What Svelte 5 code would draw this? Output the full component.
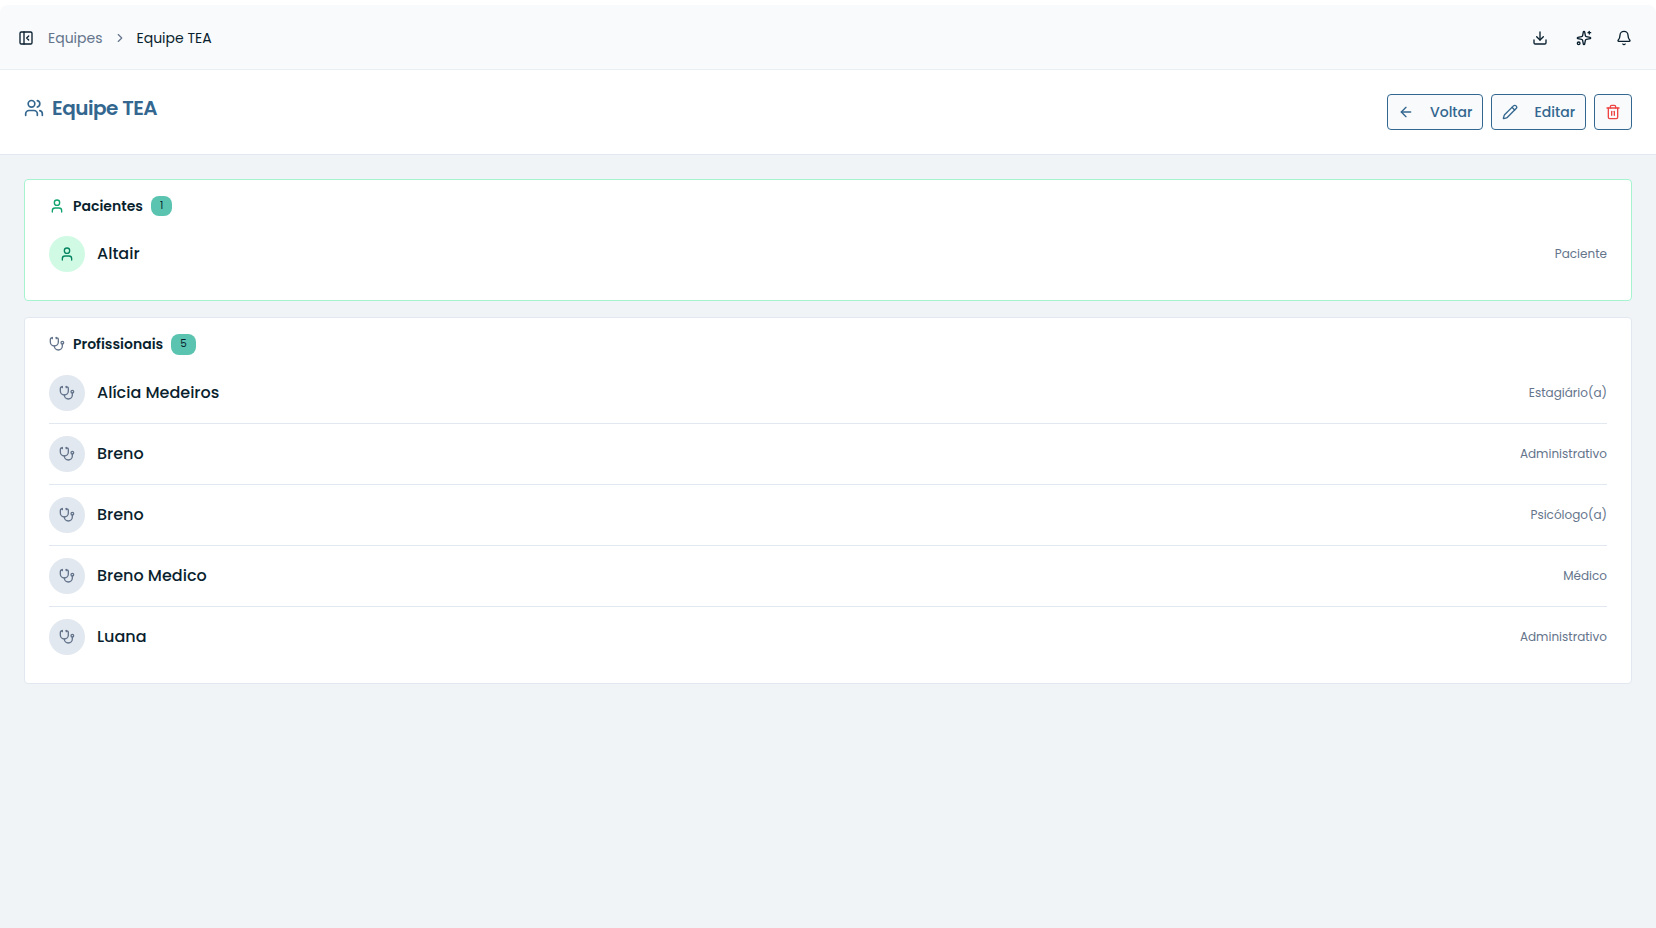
<script lang="ts">
    type Member = { name: string; role: string };
    type IconName = keyof typeof icons;

    const icons = {
        panel: '<rect width="18" height="18" x="3" y="3" rx="2"/><path d="M9 3v18"/><path d="m16 15-3-3 3-3"/>',
        chevron: '<path d="m9 18 6-6-6-6"/>',
        download:
            '<path d="M12 15V3"/><path d="M21 15v4a2 2 0 0 1-2 2H5a2 2 0 0 1-2-2v-4"/><path d="m7 10 5 5 5-5"/>',
        sparkles:
            '<path d="M11.017 2.814a1 1 0 0 1 1.966 0l1.051 5.558a2 2 0 0 0 1.594 1.594l5.558 1.051a1 1 0 0 1 0 1.966l-5.558 1.051a2 2 0 0 0-1.594 1.594l-1.051 5.558a1 1 0 0 1-1.966 0l-1.051-5.558a2 2 0 0 0-1.594-1.594l-5.558-1.051a1 1 0 0 1 0-1.966l5.558-1.051a2 2 0 0 0 1.594-1.594z"/><path d="M20 2v4"/><path d="M22 4h-4"/><circle cx="4" cy="20" r="2"/>',
        bell: '<path d="M10.268 21a2 2 0 0 0 3.464 0"/><path d="M3.262 15.326A1 1 0 0 0 4 17h16a1 1 0 0 0 .74-1.673C19.41 13.956 18 12.499 18 8A6 6 0 0 0 6 8c0 4.499-1.411 5.956-2.738 7.326"/>',
        users: '<path d="M16 21v-2a4 4 0 0 0-4-4H6a4 4 0 0 0-4 4v2"/><path d="M16 3.128a4 4 0 0 1 0 7.744"/><path d="M22 21v-2a4 4 0 0 0-3-3.87"/><circle cx="9" cy="7" r="4"/>',
        user: '<path d="M19 21v-2a4 4 0 0 0-4-4H9a4 4 0 0 0-4 4v2"/><circle cx="12" cy="7" r="4"/>',
        stethoscope:
            '<path d="M11 2v2"/><path d="M5 2v2"/><path d="M5 3H4a2 2 0 0 0-2 2v4a6 6 0 0 0 12 0V5a2 2 0 0 0-2-2h-1"/><path d="M8 15a6 6 0 0 0 12 0v-3"/><circle cx="20" cy="10" r="2"/>',
        arrow: '<path d="m12 19-7-7 7-7"/><path d="M19 12H5"/>',
        pencil: '<path d="M21.174 6.812a1 1 0 0 0-3.986-3.987L3.842 16.174a2 2 0 0 0-.5.83l-1.321 4.352a.5.5 0 0 0 .623.622l4.353-1.32a2 2 0 0 0 .83-.497z"/><path d="m15 5 4 4"/>',
        trash: '<path d="M3 6h18"/><path d="M19 6v14a2 2 0 0 1-2 2H7a2 2 0 0 1-2-2V6"/><path d="M8 6V4a2 2 0 0 1 2-2h4a2 2 0 0 1 2 2v2"/><path d="M10 11v6"/><path d="M14 11v6"/>',
    };

    const team = "Equipe TEA";

    const patients: Member[] = [{ name: "Altair", role: "Paciente" }];

    const professionals: Member[] = [
        { name: "Alícia Medeiros", role: "Estagiário(a)" },
        { name: "Breno", role: "Administrativo" },
        { name: "Breno", role: "Psicólogo(a)" },
        { name: "Breno Medico", role: "Médico" },
        { name: "Luana", role: "Administrativo" },
    ];
</script>

{#snippet icon(name: IconName, size = 16)}
    <svg
        width={size}
        height={size}
        viewBox="0 0 24 24"
        fill="none"
        stroke="currentColor"
        stroke-width="2"
        stroke-linecap="round"
        stroke-linejoin="round"
        aria-hidden="true"
    >
        {@html icons[name]}
    </svg>
{/snippet}

{#snippet memberCard(title: string, members: Member[], glyph: IconName, kind: string)}
    <section class="card {kind}">
        <h2>
            {@render icon(glyph)}
            <span>{title}</span>
            <span class="badge">{members.length}</span>
        </h2>

        <ul>
            {#each members as member}
                <li>
                    <span class="avatar">{@render icon(glyph)}</span>
                    <span class="name">{member.name}</span>
                    <span class="role">{member.role}</span>
                </li>
            {/each}
        </ul>
    </section>
{/snippet}

<div class="page">
    <header class="topbar">
        <button class="plain" type="button" aria-label="Menu">{@render icon("panel")}</button>

        <nav>
            <a href="#equipes">Equipes</a>
            {@render icon("chevron", 14)}
            <span class="current">{team}</span>
        </nav>

        <div class="tools">
            <button class="plain" type="button" aria-label="Baixar">{@render icon("download")}</button>
            <button class="plain spark" type="button" aria-label="Assistente">{@render icon("sparkles")}</button>
            <button class="plain" type="button" aria-label="Notificações">{@render icon("bell")}</button>
        </div>
    </header>

    <div class="heading">
        <h1>
            {@render icon("users", 20)}
            <span>{team}</span>
        </h1>

        <div class="actions">
            <button class="action back" type="button">{@render icon("arrow")}<span>Voltar</span></button>
            <button class="action edit" type="button">{@render icon("pencil")}<span>Editar</span></button>
            <button class="action delete" type="button" aria-label="Excluir">{@render icon("trash")}</button>
        </div>
    </div>

    <main>
        {@render memberCard("Pacientes", patients, "user", "patients")}
        {@render memberCard("Profissionais", professionals, "stethoscope", "professionals")}
    </main>
</div>

<style>
    :global(body) {
        background-color: #fff;
    }

    .page {
        --color-text: #0a1f2e;
        --color-muted: #64748b;
        --color-primary: #33678f;
        --color-border: #e2e8f0;

        box-sizing: border-box;
        display: flex;
        flex-direction: column;
        min-height: 100vh;
        padding-top: 5px;

        font-family: Poppins, Inter, sans-serif;
        color: var(--color-text);
    }

    .page * {
        box-sizing: border-box;
    }

    svg {
        display: block;
        flex-shrink: 0;
    }

    button {
        font: inherit;
        color: inherit;
        cursor: pointer;
    }

    .plain {
        padding: 0;
        border: none;
        background: none;
    }

    .topbar {
        display: flex;
        align-items: center;

        height: 65px;
        padding: 2px 24px 0 18px;

        background-color: #f8fafc;
        border-bottom: 1px solid #e9eef3;
        border-radius: 8px 8px 0 0;
    }

    nav {
        display: flex;
        align-items: center;

        margin-left: 14px;

        font-size: 14px;
        line-height: 20px;
        color: var(--color-muted);
    }

    nav a {
        width: 55px;
        margin-right: 10px;
        color: inherit;
        text-decoration: none;
    }

    .current {
        margin-left: 9.5px;
        color: var(--color-text);
    }

    .tools {
        display: flex;
        gap: 24px;
        margin-left: auto;
    }

    .spark {
        margin-left: 4px;
    }

    .heading {
        display: flex;
        justify-content: space-between;
        align-items: flex-start;

        height: 85px;
        padding: 24px;

        background-color: #fff;
        border-bottom: 1px solid var(--color-border);
    }

    h1 {
        display: flex;
        align-items: center;
        gap: 8px;

        margin: 0;

        font-size: 20px;
        font-weight: 600;
        line-height: 28px;
        letter-spacing: -0.025em;
        color: var(--color-primary);
    }

    .actions {
        display: flex;
        gap: 8px;
    }

    .action {
        display: flex;
        align-items: center;
        gap: 16px;

        height: 36px;
        padding: 0 10px;

        font-size: 14px;
        font-weight: 500;
        color: var(--color-primary);
        background-color: #f8fafc;
        border: 1px solid var(--color-primary);
        border-radius: 4px;
    }

    .back {
        width: 96px;
    }

    .edit {
        gap: 16.5px;
        width: 95px;
    }

    .delete :global(svg) {
        color: #ef4444;
    }

    main {
        flex: 1;
        display: flex;
        flex-direction: column;
        gap: 16px;

        padding: 24px;

        background-color: #f0f4f7;
    }

    .card {
        padding: 16px 24px;

        background-color: #fff;
        border: 1px solid var(--color-border);
        border-radius: 4px;
    }

    .patients {
        border-color: #a7f3d0;
    }

    h2 {
        display: flex;
        align-items: flex-start;
        gap: 8px;

        margin: 0 0 8px;

        font-size: 14px;
        font-weight: 600;
        line-height: 20px;
    }

    h2 :global(svg) {
        margin-top: 2px;
        color: var(--color-muted);
    }

    .patients h2 :global(svg) {
        color: #10a36e;
    }

    .badge {
        height: 20.4px;
        padding: 0 9px;

        font-size: 10.4px;
        font-weight: 400;
        line-height: 19px;
        background-color: #5bc4b0;
        border-radius: 8px;
    }

    ul {
        margin: 0;
        padding: 0;
        list-style: none;
    }

    li {
        display: flex;
        align-items: center;
        gap: 12px;

        padding: 12px 0;
    }

    li + li {
        border-top: 1px solid var(--color-border);
    }

    .avatar {
        display: flex;
        justify-content: center;
        align-items: center;

        width: 36px;
        height: 36px;

        color: var(--color-muted);
        background-color: #e2e8f0;
        border-radius: 50%;
    }

    .patients .avatar {
        color: #058560;
        background-color: #d1fae5;
    }

    .name {
        font-size: 16px;
        font-weight: 500;
        line-height: 24px;
    }

    .role {
        margin-left: auto;

        font-size: 12px;
        line-height: 16px;
        color: var(--color-muted);
    }
</style>
